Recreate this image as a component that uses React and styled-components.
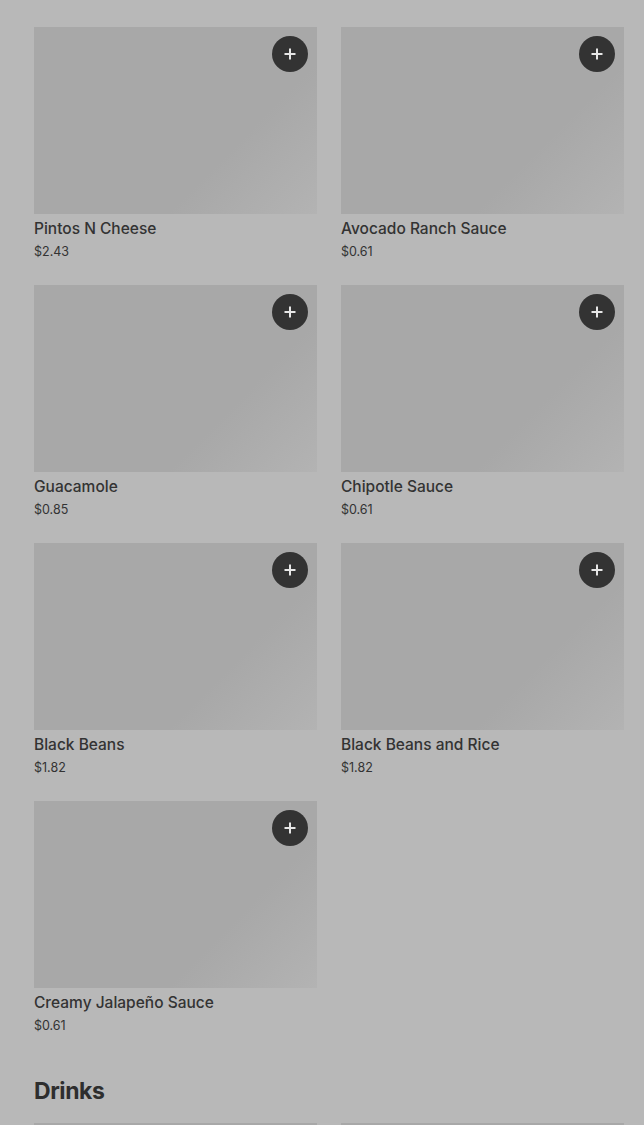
import React from "react";
import styled, { createGlobalStyle } from "styled-components";

const GlobalStyle = createGlobalStyle`
  html, body {
    margin: 0;
    padding: 0;
    background: #b8b8b8;
    font-family: Inter, "Liberation Sans", sans-serif;
    overflow: hidden;
  }
`;

const Page = styled.div`
  width: 644px;
  height: 1125px;
  overflow: hidden;
  box-sizing: border-box;
  padding: 0 20px 0 34px;
`;

const Grid = styled.ul`
  list-style: none;
  margin: ${(p) => p.$offset || "0"} 0 0;
  padding: 0;
  display: grid;
  grid-template-columns: 1fr 1fr;
  column-gap: 24px;
  row-gap: 24px;
`;

const Item = styled.li`
  display: flex;
  flex-direction: column;
`;

const Thumb = styled.div`
  position: relative;
  height: 187px;
  background: linear-gradient(135deg, #a8a8a8 0%, #a8a8a8 68%, #b3b3b3 100%);
`;

const AddButton = styled.button`
  position: absolute;
  top: 9px;
  right: 9px;
  width: 36px;
  height: 36px;
  border: none;
  border-radius: 50%;
  background: #333333;
  display: flex;
  align-items: center;
  justify-content: center;
  padding: 0;
`;

const Name = styled.div`
  margin-top: 5px;
  font-size: 15.5px;
  font-weight: 500;
  color: #333333;
  line-height: 20px;
`;

const Price = styled.div`
  margin-top: 4px;
  font-size: 12.5px;
  color: #333333;
  line-height: 18px;
`;

const Heading = styled.h2`
  margin: 42px 0 18px;
  font-size: 23px;
  font-weight: 700;
  letter-spacing: -0.4px;
  color: #2e2e2e;
  line-height: 28px;
`;

const Plus = () => (
  <svg width="14" height="14" viewBox="0 0 14 14">
    <path d="M7 1.5v11M1.5 7h11" stroke="#e6e6e6" strokeWidth="2" />
  </svg>
);

const MenuItem = ({ name, price }) => (
  <Item>
    <Thumb>
      <AddButton aria-label="Add">
        <Plus />
      </AddButton>
    </Thumb>
    <Name>{name}</Name>
    <Price>{price}</Price>
  </Item>
);

const sides = [
  { name: "Chips", price: "$1.82" },
  { name: "Queso", price: "$2.43" },
  { name: "Pintos N Cheese", price: "$2.43" },
  { name: "Avocado Ranch Sauce", price: "$0.61" },
  { name: "Guacamole", price: "$0.85" },
  { name: "Chipotle Sauce", price: "$0.61" },
  { name: "Black Beans", price: "$1.82" },
  { name: "Black Beans and Rice", price: "$1.82" },
  { name: "Creamy Jalapeño Sauce", price: "$0.61" },
];

const drinks = [
  { name: "Fountain Drink", price: "$2.19" },
  { name: "Bottled Water", price: "$2.19" },
];

export default function App() {
  return (
    <Page>
      <GlobalStyle />
      <Grid $offset="-231px">
        {sides.map((s) => (
          <MenuItem key={s.name} {...s} />
        ))}
      </Grid>
      <Heading>Drinks</Heading>
      <Grid>
        {drinks.map((d) => (
          <MenuItem key={d.name} {...d} />
        ))}
      </Grid>
    </Page>
  );
}
